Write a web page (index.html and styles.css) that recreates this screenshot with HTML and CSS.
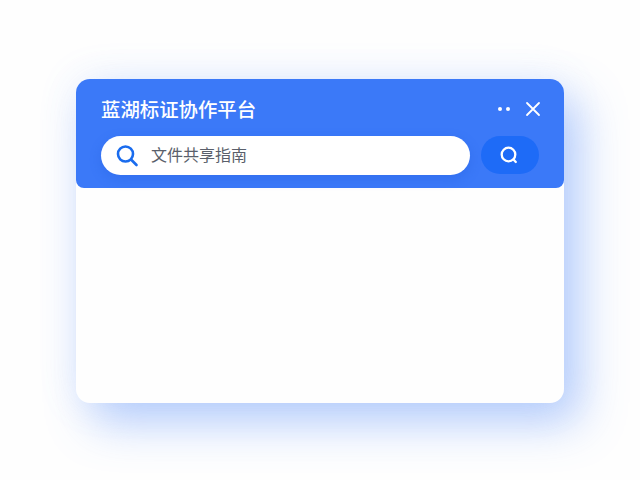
FILE: index.html
```html
<!DOCTYPE html>
<html lang="zh-CN">
<head>
    <meta charset="UTF-8">
    <title>蓝湖标证协作平台</title>
    <link rel="stylesheet" href="styles.css">
</head>
<body>
    <div class="panel">
        <div class="panel-head">
            <div class="title-row">
                <h1 class="title">蓝湖标证协作平台</h1>
                <div class="actions">
                    <span class="dots"><i></i><i></i></span>
                    <svg class="close" width="16" height="16" viewBox="0 0 16 16">
                        <path d="M2 2 L14 14 M14 2 L2 14" />
                    </svg>
                </div>
            </div>
            <div class="search-row">
                <div class="search-box">
                    <svg class="search-icon" width="24" height="24" viewBox="0 0 24 24">
                        <circle cx="10.5" cy="10" r="7.5" />
                        <path d="M16 15.5 L21.5 21" />
                    </svg>
                    <span class="keyword">文件共享指南</span>
                </div>
                <div class="search-btn">
                    <svg width="20" height="20" viewBox="0 0 20 20">
                        <circle cx="8.5" cy="9.5" r="6.8" />
                        <path d="M13.5 14.5 L15.8 17" />
                    </svg>
                </div>
            </div>
        </div>
        <div class="panel-body"></div>
    </div>
</body>
</html>
```

FILE: styles.css
```css
* {
    margin: 0;
    padding: 0;
    box-sizing: border-box;
}
body {
    width: 640px;
    height: 480px;
    background-color: #fefefe;
    overflow: hidden;
    padding: 79px 76px 0;
    font-family: "Noto Sans CJK SC", "Noto Sans", sans-serif;
}
.panel {
    width: 488px;
    height: 324px;
    display: flex;
    flex-direction: column;
    background-color: #fefefe;
    border-radius: 14px;
    box-shadow: 16px 20px 46px rgba(85, 140, 250, 0.42), 0 0 40px rgba(120, 165, 250, 0.12);
}
.panel-head {
    height: 109px;
    padding: 17px 25px 0;
    background-color: #3b79f8;
    border-radius: 14px 14px 8px 8px;
}
.title-row {
    height: 26px;
    display: flex;
    align-items: center;
    justify-content: space-between;
}
.title {
    font-size: 19.4px;
    font-weight: 500;
    color: #fff;
    padding-bottom: 2px;
}
.actions {
    display: flex;
    align-items: center;
    gap: 15px;
    margin-right: -2px;
}
.dots {
    display: flex;
    gap: 4px;
}
.dots i {
    width: 4px;
    height: 4px;
    border-radius: 50%;
    background-color: #fff;
}
.close path {
    fill: none;
    stroke: #fff;
    stroke-width: 1.8;
    stroke-linecap: round;
}
.search-row {
    display: flex;
    gap: 11px;
    margin-top: 14px;
}
.search-box {
    width: 369px;
    height: 39px;
    display: flex;
    align-items: center;
    gap: 12px;
    padding-left: 14px;
    background-color: #fff;
    border-radius: 20px;
    box-shadow: 0 4px 12px rgba(30, 90, 220, 0.3);
}
.search-icon circle, .search-icon path {
    fill: none;
    stroke: #1a6cee;
    stroke-width: 2.6;
    stroke-linecap: round;
}
.keyword {
    font-size: 16px;
    color: #5a5f6b;
    padding-bottom: 3px;
}
.search-btn {
    width: 58px;
    height: 38px;
    display: flex;
    align-items: center;
    justify-content: center;
    background-color: #1e6bf7;
    border-radius: 19px;
}
.search-btn circle, .search-btn path {
    fill: none;
    stroke: #fff;
    stroke-width: 2.3;
    stroke-linecap: round;
}
.panel-body {
    flex: 1;
}
```
